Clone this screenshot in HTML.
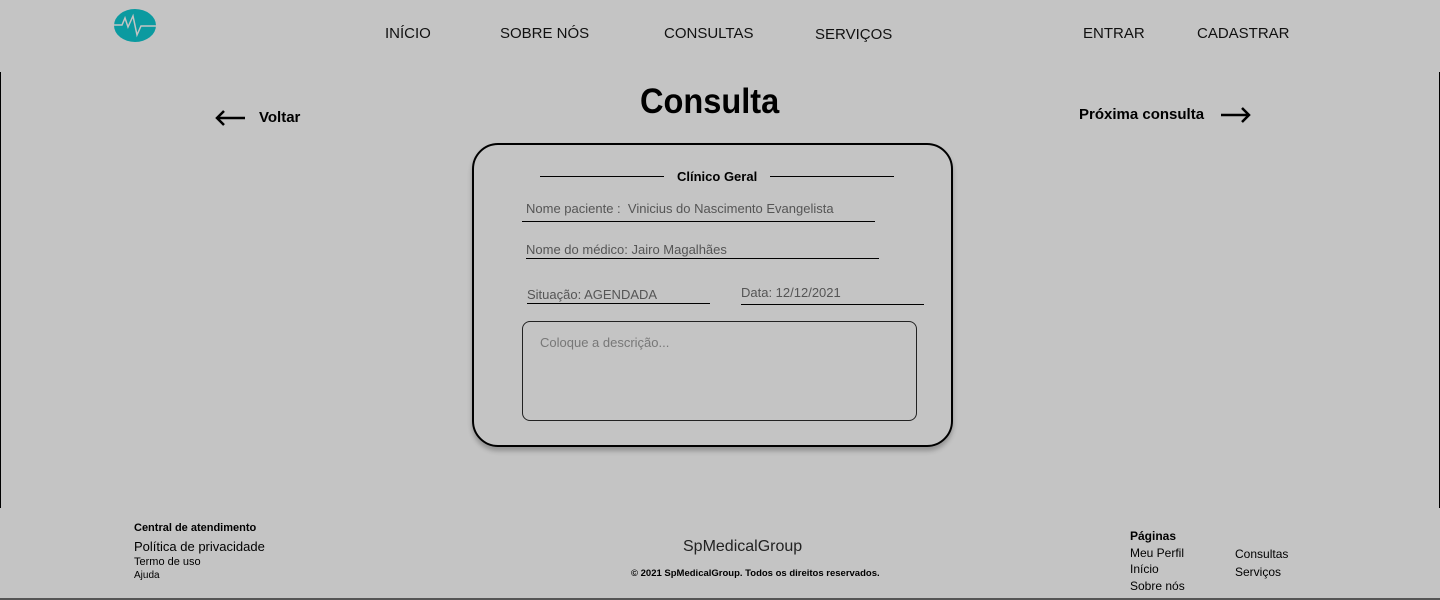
<!DOCTYPE html>
<html><head><meta charset="utf-8"><style>
*{margin:0;padding:0;box-sizing:border-box}
body{width:1440px;height:600px;background:#c4c4c4;position:relative;overflow:hidden;font-family:"Liberation Sans",sans-serif;color:#000}
.a{position:absolute;white-space:nowrap}
.nav{font-size:15px;top:25px;color:#111}
.f{font-size:13px;color:#555}
.ln{position:absolute;height:1px;background:#000}
</style></head><body>
<div class="a" style="left:0;top:72px;width:1px;height:436px;background:#000"></div>
<div class="a" style="left:1439px;top:72px;width:1px;height:436px;background:#000"></div>
<div class="a" style="left:0;top:598px;width:1440px;height:2px;background:#555"></div>
<svg class="a" style="left:114px;top:9px" width="42" height="33" viewBox="0 0 42 33"><ellipse cx="21" cy="16.5" rx="21" ry="16.5" fill="#0b9aa0"/><polyline points="0,16 8,16 11,9 14,18 19,7 23,26 27,17 42,17" fill="none" stroke="#c4c4c4" stroke-width="1.5"/></svg>
<div class="a nav" style="left:385px">INÍCIO</div>
<div class="a nav" style="left:500px">SOBRE NÓS</div>
<div class="a nav" style="left:664px">CONSULTAS</div>
<div class="a nav" style="left:815px;top:26px">SERVIÇOS</div>
<div class="a nav" style="left:1083px">ENTRAR</div>
<div class="a nav" style="left:1197px">CADASTRAR</div>
<div class="a" style="left:640px;top:82px;font-size:35px;font-weight:bold;transform:scaleX(.93);transform-origin:left">Consulta</div>
<svg class="a" style="left:215px;top:110px" width="32" height="16"><path d="M30 8H2M9 1L2 8l7 7" fill="none" stroke="#000" stroke-width="2.5"/></svg>
<div class="a" style="left:259px;top:109px;font-size:15px;font-weight:bold">Voltar</div>
<div class="a" style="left:1079px;top:106px;font-size:15px;font-weight:bold">Próxima consulta</div>
<svg class="a" style="left:1219px;top:107px" width="32" height="16"><path d="M2 8h28M23 1l7 7-7 7" fill="none" stroke="#000" stroke-width="2.5"/></svg>
<div class="a" style="left:472px;top:143px;width:481px;height:304px;border:2px solid #000;border-radius:26px;box-shadow:0 4px 5px rgba(0,0,0,.25)"></div>
<div class="ln" style="left:540px;top:176px;width:124px"></div>
<div class="ln" style="left:770px;top:176px;width:124px"></div>
<div class="a" style="left:677px;top:169px;font-size:13px;font-weight:bold">Clínico Geral</div>
<div class="a f" style="left:526px;top:201px">Nome paciente :&nbsp; Vinicius do Nascimento Evangelista</div>
<div class="ln" style="left:522px;top:221px;width:353px"></div>
<div class="a f" style="left:526px;top:242px">Nome do médico: Jairo Magalhães</div>
<div class="ln" style="left:526px;top:258px;width:353px"></div>
<div class="a f" style="left:527px;top:287px">Situação: AGENDADA</div>
<div class="ln" style="left:527px;top:303px;width:183px"></div>
<div class="a f" style="left:741px;top:285px">Data: 12/12/2021</div>
<div class="ln" style="left:741px;top:304px;width:183px"></div>
<div class="a" style="left:522px;top:321px;width:395px;height:100px;border:1px solid #222;border-radius:8px"></div>
<div class="a" style="left:540px;top:335px;font-size:13px;color:#777">Coloque a descrição...</div>
<div class="a" style="left:134px;top:522px;font-size:11px;font-weight:bold">Central de atendimento</div>
<div class="a" style="left:134px;top:539px;font-size:13px">Política de privacidade</div>
<div class="a" style="left:134px;top:556px;font-size:11px">Termo de uso</div>
<div class="a" style="left:134px;top:570px;font-size:10px">Ajuda</div>
<div class="a" style="left:683px;top:538px;font-size:16px;color:#222">SpMedicalGroup</div>
<div class="a" style="left:631px;top:568px;font-size:9.5px;font-weight:bold">© 2021 SpMedicalGroup. Todos os direitos reservados.</div>
<div class="a" style="left:1130px;top:529px;font-size:12px;font-weight:bold">Páginas</div>
<div class="a" style="left:1130px;top:546px;font-size:12px">Meu Perfil</div>
<div class="a" style="left:1130px;top:562px;font-size:12px">Início</div>
<div class="a" style="left:1130px;top:579px;font-size:12px">Sobre nós</div>
<div class="a" style="left:1235px;top:547px;font-size:12px">Consultas</div>
<div class="a" style="left:1235px;top:565px;font-size:12px">Serviços</div>
</body></html>
